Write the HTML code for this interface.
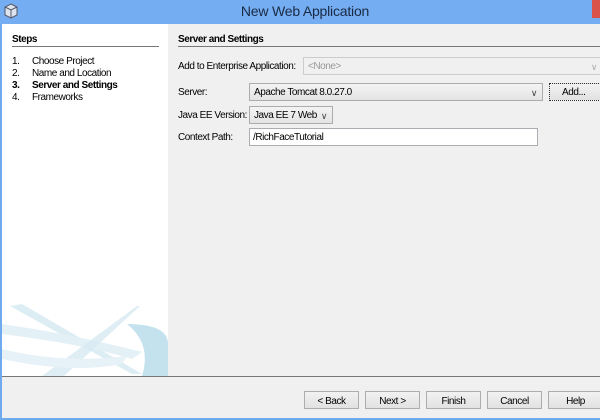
<!DOCTYPE html>
<html><head><meta charset="utf-8"><style>
*{margin:0;padding:0;box-sizing:border-box}
body{width:600px;height:420px;overflow:hidden;background:#6fa9ee;font-family:"Liberation Sans",sans-serif;font-size:10px;letter-spacing:-0.45px;color:#000;position:relative}
.a{position:absolute}
.title{left:0;top:0;width:600px;height:24px;background:#74adf2;text-align:center;font-size:14px;letter-spacing:-0.2px;line-height:22px;color:#1a2a44;padding-left:10px}
.left{left:2px;top:24px;width:166px;height:352px;background:#fff;overflow:hidden}
.main{left:168px;top:24px;width:432px;height:352px;background:#f0f0f0}
.sep{left:2px;top:376px;width:598px;height:1px;background:#777}
.bot{left:2px;top:377px;width:598px;height:41px;background:#f0f0f0}
.botline{left:0;top:418px;width:600px;height:2px;background:#6fa9ee}
.btn{height:18px;border:1px solid #adadad;background:linear-gradient(#f2f2f2,#e2e2e2);text-align:center;line-height:17px}
.combo{height:18px;border:1px solid #acacac;background:linear-gradient(#f4f4f4,#e3e3e3);line-height:17px;padding-left:4px}
.combo .ar{position:absolute;right:5px;top:1px;font-size:9px;color:#444}
.field{height:18px;border:1px solid #abadb3;background:#fff;line-height:17px;padding-left:3px}
.lbl{line-height:14px}
</style></head><body>
<div class="a title">New Web Application</div>
<svg class="a" style="left:4px;top:3px" width="14" height="16" viewBox="0 0 14 16"><path d="M7 1L13 4V12L7 15L1 12V4Z" fill="#dde6f0" stroke="#556" stroke-width="1"/><path d="M1 4L7 7L13 4M7 7V15" fill="none" stroke="#556" stroke-width="1"/></svg>
<div class="a" style="right:0;top:0;width:8px;height:18px;background:#d9534a"></div>
<div class="a left">
 <div class="a" style="left:10px;top:10px;font-weight:bold">Steps</div>
 <div class="a" style="left:10px;top:22px;width:147px;height:1px;background:#777"></div>
 <div class="a lbl" style="left:10px;top:31px">1.</div><div class="a lbl" style="left:30px;top:31px">Choose Project</div>
 <div class="a lbl" style="left:10px;top:43px">2.</div><div class="a lbl" style="left:30px;top:43px">Name and Location</div>
 <div class="a lbl" style="left:10px;top:55px;font-weight:bold">3.</div><div class="a lbl" style="left:30px;top:55px;font-weight:bold">Server and Settings</div>
 <div class="a lbl" style="left:10px;top:67px">4.</div><div class="a lbl" style="left:30px;top:67px">Frameworks</div>
 <svg class="a" style="left:0;top:280px" width="166" height="72" viewBox="0 0 166 72">
  <path d="M8 2 L130 70 L140 70 L20 0Z" fill="#dcedf4"/>
  <path d="M0 30 Q80 40 130 55 L140 48 Q70 30 0 20Z" fill="#e3f1f6"/>
  <path d="M135 2 L40 72 L62 72 L138 2Z" fill="#d7eaf2" opacity=".8"/>
  <path d="M125 20 Q166 20 166 40 L166 72 L140 72 Q150 40 125 20Z" fill="#c3e2ed"/>
  <path d="M0 55 Q70 70 120 60 L125 52 Q60 60 0 45Z" fill="#e6f2f7"/>
 </svg>
</div>
<div class="a main">
 <div class="a" style="left:10px;top:10px;font-weight:bold">Server and Settings</div>
 <div class="a" style="left:10px;top:22px;width:422px;height:1px;background:#777"></div>
 <div class="a lbl" style="left:10px;top:36px">Add to Enterprise Application:</div>
 <div class="a combo" style="left:135px;top:33px;width:300px;color:#999;background:#f0f0f0;border-color:#ccc">&lt;None&gt;<span class="ar" style="color:#aaa">&#8744;</span></div>
 <div class="a lbl" style="left:10px;top:62px">Server:</div>
 <div class="a combo" style="left:81px;top:59px;width:294px">Apache Tomcat 8.0.27.0<span class="ar">&#8744;</span></div>
 <div class="a btn" style="left:381px;top:59px;width:52px;border:1px dotted #333;text-align:left;padding-left:12px">Add...</div>
 <div class="a lbl" style="left:10px;top:85px">Java EE Version:</div>
 <div class="a combo" style="left:81px;top:82px;width:84px">Java EE 7 Web<span class="ar">&#8744;</span></div>
 <div class="a lbl" style="left:10px;top:107px">Context Path:</div>
 <div class="a field" style="left:81px;top:104px;width:289px">/RichFaceTutorial</div>
</div>
<div class="a sep"></div>
<div class="a bot"></div>
<div class="a btn" style="left:304px;top:391px;width:55px;line-height:19px">&lt; Back</div>
<div class="a btn" style="left:365px;top:391px;width:55px;line-height:19px">Next &gt;</div>
<div class="a btn" style="left:426px;top:391px;width:55px;line-height:19px">Finish</div>
<div class="a btn" style="left:487px;top:391px;width:55px;line-height:19px">Cancel</div>
<div class="a btn" style="left:548px;top:391px;width:55px;line-height:19px">Help</div>
<div class="a botline"></div>
</body></html>
